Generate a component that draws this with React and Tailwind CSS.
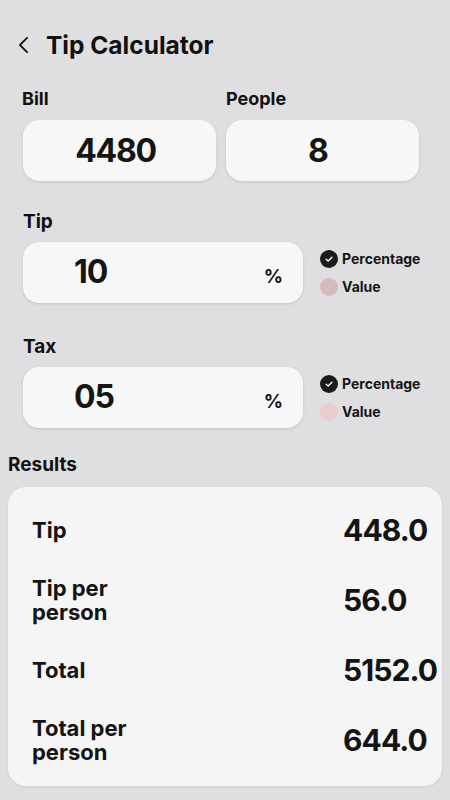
import { useState } from "react";

const font = { fontFamily: "Inter, Roboto, sans-serif" };

function Radio({ label, checked, tint }) {
  return (
    <div className="flex items-center gap-[4px]">
      {checked ? (
        <span className="flex h-[18px] w-[18px] items-center justify-center rounded-full bg-[#1b1b1d]">
          <svg viewBox="0 0 12 12" className="h-[10px] w-[10px]" fill="none">
            <path d="M2.5 6.2 5 8.5 9.5 3.8" stroke="white" strokeWidth="1.6" strokeLinecap="round" strokeLinejoin="round" />
          </svg>
        </span>
      ) : (
        <span className={`h-[18px] w-[18px] rounded-full ${tint}`} />
      )}
      <span className="text-[14px] font-bold leading-[18px] text-[#161616]">{label}</span>
    </div>
  );
}

function RateField({ label, value, tint }) {
  return (
    <div>
      <p className="pl-[23px] text-[19px] font-bold leading-[24px] text-[#111]">{label}</p>
      <div className="mt-[8px] flex items-center pl-[23px]">
        <div className="flex h-[61px] w-[280px] items-baseline rounded-[16px] bg-[#f7f7f7] pl-[51px] pr-[20px] pt-[10px] shadow-[0_1px_3px_rgba(0,0,0,0.12)]">
          <span className="text-[32px] font-bold leading-[40px] tracking-[-0.03em] text-[#151515]">{value}</span>
          <span className="ml-auto text-[19px] font-bold text-[#151515]">%</span>
        </div>
        <div className="ml-[17px] flex flex-col gap-[10px]">
          <Radio label="Percentage" checked />
          <Radio label="Value" tint={tint} />
        </div>
      </div>
    </div>
  );
}

const results = [
  { label: "Tip", value: "448.0" },
  { label: "Tip per\nperson", value: "56.0" },
  { label: "Total", value: "5152.0" },
  { label: "Total per\nperson", value: "644.0" },
];

export default function App() {
  const [bill] = useState("4480");
  const [people] = useState("8");

  return (
    <div style={font} className="min-h-[800px] w-[450px] bg-[#dfdfe1] pt-[29px] text-[#111]">
      <div className="flex h-[32px] items-center">
        <svg viewBox="0 0 14 20" className="ml-[17px] h-[18px] w-[13px]" fill="none">
          <path d="M11 2 3 10l8 8" stroke="#151515" strokeWidth="2" strokeLinecap="round" strokeLinejoin="round" />
        </svg>
        <h1 className="ml-[16px] text-[24.5px] font-bold leading-[32px]">Tip Calculator</h1>
      </div>

      <div className="mt-[26px] grid grid-cols-2 gap-x-[10px] pl-[23px] pr-[31px]">
        <div>
          <p className="-ml-[1px] text-[18px] font-bold leading-[24px]">Bill</p>
          <div className="mt-[9px] flex h-[61px] items-center justify-center rounded-[16px] bg-[#f7f7f7] shadow-[0_1px_3px_rgba(0,0,0,0.12)]">
            <span className="-ml-[8px] text-[32px] font-bold tracking-[-0.04em] text-[#151515]">{bill}</span>
          </div>
        </div>
        <div>
          <p className="text-[18px] font-bold leading-[24px]">People</p>
          <div className="mt-[9px] flex h-[61px] items-center justify-center rounded-[16px] bg-[#f7f7f7] shadow-[0_1px_3px_rgba(0,0,0,0.12)]">
            <span className="-ml-[8px] text-[32px] font-bold text-[#151515]">{people}</span>
          </div>
        </div>
      </div>

      <div className="mt-[29px]">
        <RateField label="Tip" value="10" tint="bg-[#d8babe]" />
      </div>
      <div className="mt-[32px]">
        <RateField label="Tax" value="05" tint="bg-[#e8cdd1]" />
      </div>

      <p className="ml-[8px] mt-[25px] text-[19px] font-bold leading-[24px]">Results</p>
      <div className="mx-[8px] mt-[10px] flex flex-col gap-[26px] rounded-[18px] bg-[#f5f5f5] pb-[22px] pl-[24px] pt-[23px] shadow-[0_1px_3px_rgba(0,0,0,0.08)]">
        {results.map((r) => (
          <div key={r.label} className="grid grid-cols-[1fr_99px] items-center">
            <span className="whitespace-pre-line text-[22px] font-bold leading-[24px] text-[#141414]">{r.label}</span>
            <span className="text-[30px] font-bold leading-[40px] tracking-[-0.03em] text-[#141414]">{r.value}</span>
          </div>
        ))}
      </div>
    </div>
  );
}
